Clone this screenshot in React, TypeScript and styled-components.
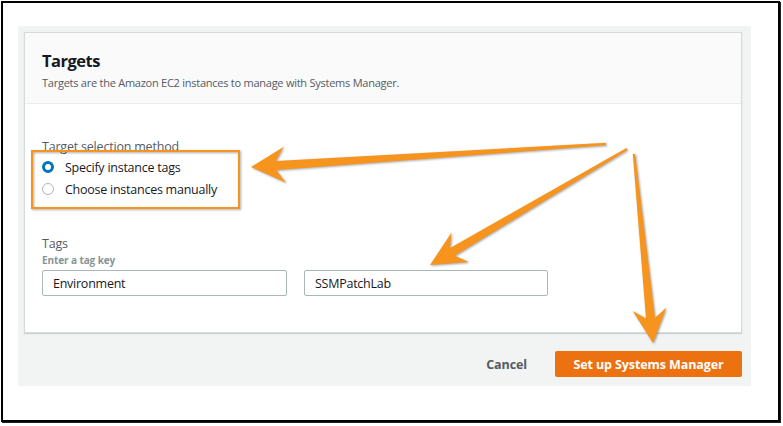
import React from "react";
import styled, { createGlobalStyle } from "styled-components";

const Global = createGlobalStyle`
  html, body { margin: 0; padding: 0; background: #ffffff; }
  body { font-family: "Open Sans", "Noto Sans", Arial, sans-serif; color: #16191f; }
  * { box-sizing: border-box; }
`;

const Page = styled.div`
  position: relative;
  width: 783px;
  height: 426px;
  overflow: hidden;
`;

const Frame = styled.div`
  margin: 1px 0 0 1px;
  width: 779px;
  height: 421px;
  border: 2px solid #000;
  box-shadow: 1px 1px 0 #222;
  padding: 23px 0 0 15px;
  background: #fff;
`;

const Console = styled.div`
  width: 733px;
  height: 360px;
  background: #f2f3f3;
  padding: 6px 0 0 6px;
  display: flex;
  flex-direction: column;
`;

const Card = styled.section`
  width: 718px;
  height: 301px;
  background: #fff;
  border: 1px solid #d5dbdb;
  box-shadow: 0 1px 1px rgba(0, 22, 40, 0.15);
  display: flex;
  flex-direction: column;
`;

const CardHeader = styled.header`
  height: 71px;
  background: #fafafa;
  border-bottom: 1px solid #eaeded;
  padding: 17px 17px 0;
`;

const Title = styled.h2`
  margin: 0;
  font-size: 16.5px;
  line-height: 21px;
  font-weight: 700;
  letter-spacing: -0.5px;
  color: #16191f;
`;

const Subtitle = styled.p`
  margin: 5px 0 0;
  font-size: 11px;
  line-height: 14px;
  letter-spacing: -0.25px;
  color: #545b64;
`;

const CardBody = styled.div`
  padding: 34px 17px 0;
  display: flex;
  flex-direction: column;
`;

const FieldLabel = styled.div`
  font-size: 12.5px;
  line-height: 18px;
  letter-spacing: -0.2px;
  color: #545b64;
`;

const RadioGroup = styled.div`
  display: flex;
  flex-direction: column;
`;

const RadioRow = styled.label`
  display: flex;
  align-items: center;
  height: 22px;
  gap: 11px;
  font-size: 12.5px;
  letter-spacing: -0.25px;
  color: #16191f;
`;

const RadioDot = styled.span<{ $on?: boolean }>`
  width: 12px;
  height: 12px;
  border-radius: 50%;
  flex: none;
  background: #ffffff;
  border: ${(p) => (p.$on ? "3.5px solid #0073bb" : "1px solid #aab7b8")};
`;

const TagsBlock = styled.div`
  margin-top: 35px;
  display: flex;
  flex-direction: column;
`;

const Hint = styled.div`
  font-size: 10px;
  line-height: 14px;
  font-weight: 700;
  letter-spacing: -0.1px;
  color: #879596;
  margin-bottom: 3px;
`;

const InputRow = styled.div`
  display: flex;
  gap: 17px;
`;

const Field = styled.div<{ $w: number }>`
  width: ${(p) => p.$w}px;
  height: 26px;
  border: 1px solid #aab7b8;
  border-radius: 2px;
  padding: 0 10px;
  display: flex;
  align-items: center;
  font-size: 12.5px;
  letter-spacing: -0.25px;
  color: #16191f;
`;

const Footer = styled.div`
  display: flex;
  justify-content: flex-end;
  align-items: center;
  gap: 28px;
  width: 718px;
  margin-top: 18px;
`;

const TextButton = styled.span`
  font-size: 12.5px;
  font-weight: 700;
  letter-spacing: -0.1px;
  color: #545b64;
`;

const PrimaryButton = styled.span`
  width: 187px;
  height: 26px;
  border-radius: 2px;
  background: #ec7211;
  color: #fff;
  font-size: 12.5px;
  font-weight: 700;
  letter-spacing: -0.1px;
  display: flex;
  align-items: center;
  justify-content: center;
`;

const Overlay = styled.svg`
  position: absolute;
  left: 0;
  top: 0;
  pointer-events: none;
  filter: drop-shadow(1px 1px 1px rgba(0, 0, 0, 0.35));
`;

type Pt = [number, number];

function arrow(tail: Pt, tip: Pt, headLen = 34, headHalf = 17, notch = 9, tw = 1, hw = 4.5) {
  const dx = tip[0] - tail[0];
  const dy = tip[1] - tail[1];
  const len = Math.hypot(dx, dy);
  const d: Pt = [dx / len, dy / len];
  const n: Pt = [-d[1], d[0]];
  const at = (base: Pt, back: number, side: number): Pt => [
    base[0] - d[0] * back + n[0] * side,
    base[1] - d[1] * back + n[1] * side,
  ];
  const pts: Pt[] = [
    at(tail, 0, tw),
    at(tip, headLen - notch, hw),
    at(tip, headLen, headHalf),
    tip,
    at(tip, headLen, -headHalf),
    at(tip, headLen - notch, -hw),
    at(tail, 0, -tw),
  ];
  return pts.map((p) => `${p[0].toFixed(1)},${p[1].toFixed(1)}`).join(" ");
}

const ORANGE = "#f7941e";

export default function App() {
  return (
    <Page>
      <Global />
      <Frame>
        <Console>
          <Card>
            <CardHeader>
              <Title>Targets</Title>
              <Subtitle>Targets are the Amazon EC2 instances to manage with Systems Manager.</Subtitle>
            </CardHeader>
            <CardBody>
              <FieldLabel>Target selection method</FieldLabel>
              <RadioGroup>
                <RadioRow>
                  <RadioDot $on />
                  Specify instance tags
                </RadioRow>
                <RadioRow>
                  <RadioDot />
                  Choose instances manually
                </RadioRow>
              </RadioGroup>
              <TagsBlock>
                <FieldLabel>Tags</FieldLabel>
                <Hint>Enter a tag key</Hint>
                <InputRow>
                  <Field $w={245}>Environment</Field>
                  <Field $w={244}>SSMPatchLab</Field>
                </InputRow>
              </TagsBlock>
            </CardBody>
          </Card>
          <Footer>
            <TextButton>Cancel</TextButton>
            <PrimaryButton>Set up Systems Manager</PrimaryButton>
          </Footer>
        </Console>
      </Frame>
      <Overlay width={783} height={426} viewBox="0 0 783 426">
        <rect x={32} y={151} width={207} height={57} fill="none" stroke={ORANGE} strokeWidth={2} />
        <polygon points={arrow([606, 144], [251, 167], 34, 18, 9, 1.2, 4.5)} fill={ORANGE} />
        <polygon points={arrow([627, 149], [430, 265], 35, 17, 9, 1.2, 4.5)} fill={ORANGE} />
        <polygon points={arrow([634, 154], [653, 343], 34, 17, 9, 1.2, 4.5)} fill={ORANGE} />
      </Overlay>
    </Page>
  );
}
